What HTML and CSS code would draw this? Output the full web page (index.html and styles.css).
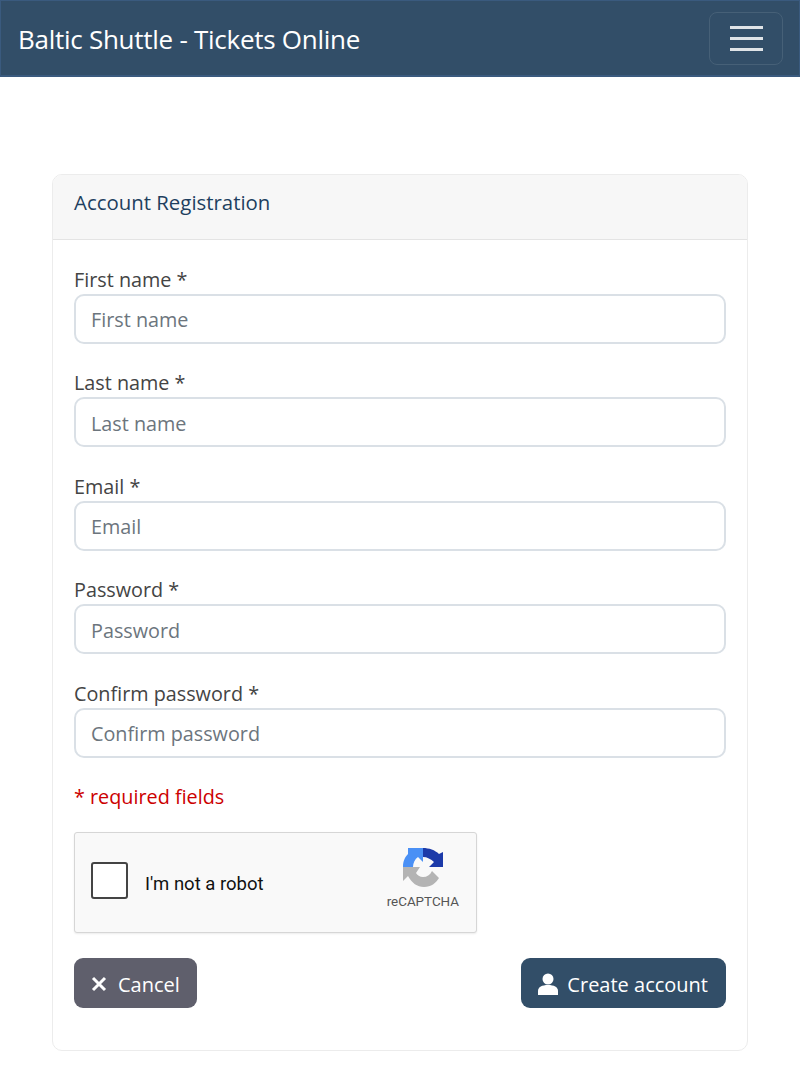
FILE: index.html
```html
<!DOCTYPE html>
<html lang="en">
<head>
    <meta charset="UTF-8">
    <meta name="viewport" content="width=device-width, initial-scale=1.0">
    <title>Baltic Shuttle - Tickets Online</title>
    <link rel="stylesheet" href="styles.css">
</head>
<body>
    <nav class="navbar">
        <a class="navbar-brand" href="#">Baltic Shuttle - Tickets Online</a>
        <button class="navbar-toggler" type="button" aria-label="Menu">
            <span class="toggler-line"></span>
            <span class="toggler-line"></span>
            <span class="toggler-line"></span>
        </button>
    </nav>

    <main class="container">
        <form class="card">
            <div class="card-header">Account Registration</div>
            <div class="card-body">
                <div class="form-group">
                    <label for="firstName">First name *</label>
                    <input id="firstName" type="text" class="form-control" placeholder="First name">
                </div>
                <div class="form-group">
                    <label for="lastName">Last name *</label>
                    <input id="lastName" type="text" class="form-control" placeholder="Last name">
                </div>
                <div class="form-group">
                    <label for="email">Email *</label>
                    <input id="email" type="email" class="form-control" placeholder="Email">
                </div>
                <div class="form-group">
                    <label for="password">Password *</label>
                    <input id="password" type="password" class="form-control" placeholder="Password">
                </div>
                <div class="form-group">
                    <label for="confirmPassword">Confirm password *</label>
                    <input id="confirmPassword" type="password" class="form-control" placeholder="Confirm password">
                </div>

                <p class="required-note">* required fields</p>

                <div class="recaptcha">
                    <span class="recaptcha-check"></span>
                    <span class="recaptcha-label">I'm not a robot</span>
                    <div class="recaptcha-brand">
                        <svg class="recaptcha-logo" viewBox="0 0 40 40" width="40" height="40">
                            <path fill="#4a90f5" d="M0 20 C0 14 2 10 5 7 L5 1 L20 1 L20 15 L15 10 C12 12 10 16 10 20 Z"/>
                            <path fill="#1c3aa9" d="M20 1 C26 1 32 3 36 7 L40 5 L40 20 L26 20 L31 15 C28 12 24 10 20 10 Z"/>
                            <path fill="#b4b4b4" d="M0 20 L0 34 L5 29 C9 36 14 40 21 40 C28 40 33 36 36 31 L29 24 C27 28 24 30 20 30 C17 30 14 28 13 26 L17 20 Z"/>
                        </svg>
                        <span class="recaptcha-name">reCAPTCHA</span>
                    </div>
                </div>

                <div class="form-actions">
                    <button type="button" class="btn btn-secondary">
                        <svg class="btn-icon" viewBox="0 0 16 16" width="16" height="16">
                            <path d="M2 2 L14 14 M14 2 L2 14" stroke="#fff" stroke-width="3" fill="none"/>
                        </svg>
                        Cancel
                    </button>
                    <button type="submit" class="btn btn-primary">
                        <svg class="btn-icon" viewBox="0 0 20 22" width="20" height="22">
                            <circle cx="10" cy="6" r="5.5" fill="#fff"/>
                            <path d="M0 22 V18 C0 14 4 12 10 12 C16 12 20 14 20 18 V22 Z" fill="#fff"/>
                        </svg>
                        Create account
                    </button>
                </div>
            </div>
        </form>
    </main>
</body>
</html>
```

FILE: styles.css
```css
* {
    margin: 0;
    padding: 0;
    box-sizing: border-box;
}

body {
    background-color: #fff;
    color: #444;
    font-family: "Open Sans", "Noto Sans", sans-serif;
    font-size: 19.8px;
}

.navbar {
    height: 77px;
    background-color: #324e68;
    border: 1px solid #3a5a7e;
    border-bottom-width: 2px;
    display: flex;
    justify-content: space-between;
    align-items: center;
    padding: 0 16px 0 17px;
}

.navbar-brand {
    color: #fff;
    font-size: 26px;
    letter-spacing: -0.27px;
    text-decoration: none;
    padding-top: 1px;
}

.navbar-toggler {
    width: 74px;
    height: 53px;
    background: none;
    border: 1px solid #466077;
    border-radius: 8px;
    display: flex;
    flex-direction: column;
    justify-content: center;
    align-items: center;
    gap: 8px;
}

.toggler-line {
    width: 33px;
    height: 3px;
    background-color: #dfe3e7;
}

.container {
    padding: 97px 52px 0;
}

.card {
    border: 1px solid #ececec;
    border-radius: 10px;
    overflow: hidden;
}

.card-header {
    height: 65px;
    background-color: #f7f7f7;
    border-bottom: 1px solid #e4e4e4;
    color: #1e3f5f;
    font-size: 20.4px;
    display: flex;
    align-items: center;
    padding: 0 21px 10px;
}

.card-body {
    padding: 24.6px 21px 42px;
}

.form-group {
    margin-bottom: 24.5px;
}

.form-group label {
    display: block;
    height: 29px;
    line-height: 29px;
}

.form-control {
    display: block;
    width: 100%;
    height: 50px;
    border: 2px solid #dae0e6;
    border-radius: 10px;
    padding: 2px 15px 0;
    font-family: inherit;
    font-size: 19.8px;
    color: #444;
    outline: none;
}

.form-control::placeholder {
    color: #6c757d;
    opacity: 1;
}

.required-note {
    color: #c00;
    line-height: 29px;
    margin-top: -0.6px;
}

.recaptcha {
    width: 403px;
    height: 101px;
    margin-top: 21px;
    background-color: #f9f9f9;
    border: 1px solid #d6d6d6;
    border-radius: 3px;
    box-shadow: 0 1px 2px rgba(0, 0, 0, 0.08);
    display: flex;
    align-items: center;
    padding: 0 17px 0 16px;
}

.recaptcha-check {
    width: 37px;
    height: 37px;
    background-color: #fff;
    border: 2px solid #444;
    border-radius: 3px;
    margin-top: -4px;
}

.recaptcha-label {
    margin-left: 17px;
    margin-top: 4px;
    flex: 1;
    color: #111;
    font-family: Roboto, sans-serif;
    font-size: 18.5px;
}

.recaptcha-brand {
    display: flex;
    flex-direction: column;
    align-items: center;
    gap: 7px;
    margin-top: -9px;
}

.recaptcha-name {
    color: #555;
    font-family: Roboto, sans-serif;
    font-size: 13.4px;
}

.form-actions {
    display: flex;
    justify-content: space-between;
    margin-top: 25px;
}

.btn {
    height: 50px;
    border: 1px solid transparent;
    border-radius: 9px;
    color: #fff;
    font-family: inherit;
    font-size: 20px;
    display: flex;
    align-items: center;
    padding: 3px 16px 0;
}

.btn-secondary {
    background-color: #5f5f6c;
    gap: 11px;
}

.btn-primary {
    background-color: #324e68;
    gap: 9px;
    padding-right: 17px;
}
```
